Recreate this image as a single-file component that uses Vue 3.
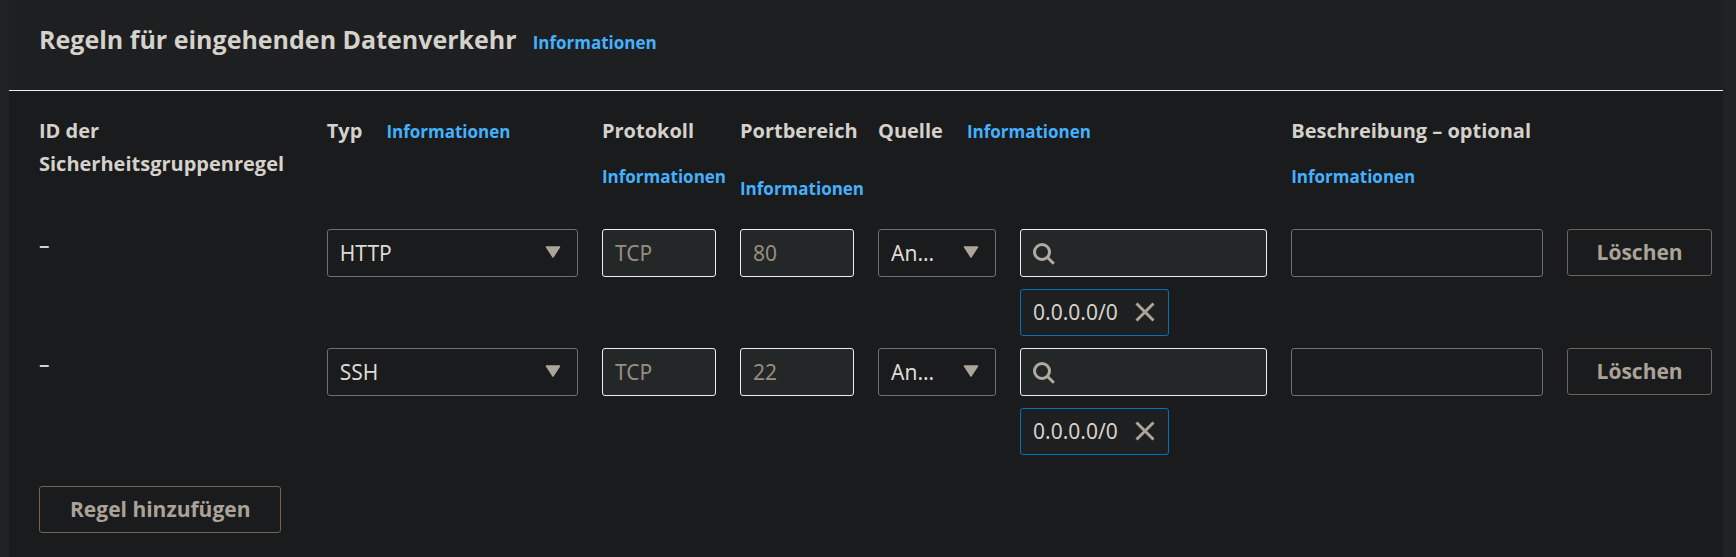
<script setup>
import { reactive } from 'vue'

const columns = [
  { key: 'id', label: 'ID der Sicherheitsgruppenregel', info: false, layout: 'inline' },
  { key: 'type', label: 'Typ', info: true, layout: 'inline' },
  { key: 'protocol', label: 'Protokoll', info: true, layout: 'stacked' },
  { key: 'port', label: 'Portbereich', info: true, layout: 'stacked spaced' },
  { key: 'source', label: 'Quelle', info: true, layout: 'inline' },
  { key: 'description', label: 'Beschreibung – optional', info: true, layout: 'stacked' },
]

const rules = reactive([
  { id: 1, type: 'HTTP', protocol: 'TCP', port: '80', source: 'Anywhere-IPv4', search: '', cidr: '0.0.0.0/0', description: '' },
  { id: 2, type: 'SSH', protocol: 'TCP', port: '22', source: 'Anywhere-IPv4', search: '', cidr: '0.0.0.0/0', description: '' },
])
let nextId = 3

function addRule() {
  rules.push({ id: nextId++, type: 'HTTP', protocol: 'TCP', port: '80', source: 'Anywhere-IPv4', search: '', cidr: '0.0.0.0/0', description: '' })
}
function removeRule(index) {
  rules.splice(index, 1)
}
</script>

<template>
  <section class="panel" aria-labelledby="panel-title">
    <header class="panel-header">
      <h2 id="panel-title">Regeln für eingehenden Datenverkehr</h2>
      <a class="info" href="#">Informationen</a>
    </header>
    <div class="panel-body">
      <table class="rules">
        <colgroup>
          <col v-for="c in columns" :key="c.key" :class="'col-' + c.key">
          <col>
        </colgroup>
        <thead>
          <tr>
            <th v-for="c in columns" :key="c.key" scope="col">
              <div class="heading" :class="c.layout">
                <span>{{ c.label }}</span>
                <a v-if="c.info" class="info" href="#">Informationen</a>
              </div>
            </th>
            <td></td>
          </tr>
        </thead>
        <tbody>
          <tr v-for="(rule, i) in rules" :key="rule.id">
            <td><span class="rule-id">–</span></td>
            <td>
              <div class="select">
                <select v-model="rule.type" aria-label="Typ">
                  <option>HTTP</option>
                  <option>SSH</option>
                </select>
                <svg class="caret" viewBox="0 0 16 12" aria-hidden="true"><path d="M1.5 1h13L8 11z" /></svg>
              </div>
            </td>
            <td><input class="field" type="text" :value="rule.protocol" disabled aria-label="Protokoll"></td>
            <td><input class="field" type="text" :value="rule.port" disabled aria-label="Portbereich"></td>
            <td>
              <div class="source">
                <div class="select">
                  <select v-model="rule.source" aria-label="Quelle">
                    <option>Anywhere-IPv4</option>
                  </select>
                  <svg class="caret" viewBox="0 0 16 12" aria-hidden="true"><path d="M1.5 1h13L8 11z" /></svg>
                </div>
                <div class="source-values">
                  <div class="search">
                    <svg class="magnifier" viewBox="0 0 22 22" aria-hidden="true">
                      <circle cx="9" cy="9" r="7.5" />
                      <path d="M14.3 14.3L20.8 20.8" />
                    </svg>
                    <input v-model="rule.search" class="field" type="search" disabled aria-label="Quelle suchen">
                  </div>
                  <div v-if="rule.cidr" class="token">
                    <span>{{ rule.cidr }}</span>
                    <button type="button" :aria-label="rule.cidr + ' entfernen'" @click="rule.cidr = ''">
                      <svg viewBox="0 0 20 20" aria-hidden="true"><path d="M1.5 1.5l17 17M18.5 1.5l-17 17" /></svg>
                    </button>
                  </div>
                </div>
              </div>
            </td>
            <td><input v-model="rule.description" class="field" type="text" aria-label="Beschreibung – optional"></td>
            <td><button class="button wide" type="button" @click="removeRule(i)">Löschen</button></td>
          </tr>
        </tbody>
      </table>
      <button class="button" type="button" @click="addRule">Regel hinzufügen</button>
    </div>
  </section>
</template>

<style>
body {
  background: #1f2323;
}
</style>

<style scoped>
.panel {
  box-sizing: border-box;
  min-height: 100vh;
  margin: 0 13px 0 9px;
  background: #1a1b1c;
  color: #d5d1cb;
  font-family: "Open Sans", "Noto Sans", sans-serif;
  font-size: 20px;
  line-height: 33px;
}
.panel-header {
  display: flex;
  align-items: baseline;
  gap: 16px;
  padding: 19px 30px 31px;
  background: #1e1f20;
  border-bottom: 1px solid #eeeeee;
}
h2 {
  margin: 0;
  font-size: 25px;
  font-weight: 700;
  line-height: 40px;
}
.info {
  color: #44b1ff;
  font-size: 17px;
  font-weight: 700;
  text-decoration: none;
}
.panel-body {
  padding: 23px 11px 23px 30px;
}
.rules {
  width: 100%;
  margin-bottom: 19px;
  table-layout: fixed;
  border-collapse: collapse;
}
.col-id { width: 17.2%; }
.col-type { width: 16.45%; }
.col-protocol { width: 8.25%; }
.col-port { width: 8.25%; }
.col-source { width: 24.7%; }
.col-description { width: 16.5%; }
th,
td {
  padding: 0 24px 12px 0;
  text-align: left;
  vertical-align: top;
}
th {
  padding: 0 0 24px;
  font-weight: 700;
}
td:last-child {
  padding-right: 0;
}
.heading {
  display: flex;
  align-items: baseline;
}
.heading.inline {
  gap: 24px;
}
.heading.stacked {
  flex-direction: column;
  gap: 13px;
}
.heading.spaced {
  gap: 25px;
}
.rule-id {
  display: block;
  font-size: 21px;
  font-weight: 600;
}
select,
.field {
  display: block;
  box-sizing: border-box;
  width: 100%;
  height: 48px;
  margin: 0;
  padding: 0 12px;
  border: 1px solid #687078;
  border-radius: 3px;
  outline: none;
  background: #1a1b1c;
  color: #dedad4;
  font-family: "Noto Sans", sans-serif;
  font-size: 21px;
  font-weight: 400;
  line-height: 33px;
  appearance: none;
}
select {
  padding-right: 54px;
  overflow: hidden;
  text-overflow: ellipsis;
  white-space: nowrap;
}
.field:disabled {
  border-color: #eeeeee;
  background: #232727;
  color: #978d80;
  opacity: 1;
}
.select,
.search {
  position: relative;
}
.caret {
  position: absolute;
  top: 17px;
  right: 17px;
  width: 16px;
  height: 12px;
  fill: #aca599;
  stroke: #aca599;
  stroke-width: 1.5;
  stroke-linejoin: round;
  pointer-events: none;
}
.magnifier {
  position: absolute;
  top: 14px;
  left: 13px;
  width: 22px;
  height: 22px;
  fill: none;
  stroke: #b1aaa0;
  stroke-width: 3;
}
.search .field {
  padding-left: 48px;
}
.source {
  display: grid;
  grid-template-columns: 118fr 247fr;
  gap: 24px;
}
.source-values {
  display: flex;
  flex-direction: column;
  align-items: flex-start;
  gap: 12px;
}
.search {
  width: 100%;
}
.token {
  display: flex;
  align-items: center;
  gap: 17px;
  box-sizing: border-box;
  height: 47px;
  padding: 0 13px 1px 12px;
  border: 1px solid #0073bb;
  border-radius: 3px;
  background: #1e1f20;
  font-family: "Noto Sans", sans-serif;
  font-size: 21px;
}
.token button {
  display: flex;
  padding: 0;
  border: 0;
  background: none;
  cursor: pointer;
}
.token svg {
  width: 20px;
  height: 20px;
  fill: none;
  stroke: #aca599;
  stroke-width: 3;
}
.button {
  box-sizing: border-box;
  height: 47px;
  padding: 0 30px 1px;
  border: 1px solid #6d6457;
  border-radius: 3px;
  background: #1a1b1c;
  color: #aba398;
  font: inherit;
  font-size: 21px;
  font-weight: 700;
  line-height: 33px;
  white-space: nowrap;
  cursor: pointer;
}
.button.wide {
  display: block;
  width: 100%;
  padding: 0 0 1px;
}
</style>
